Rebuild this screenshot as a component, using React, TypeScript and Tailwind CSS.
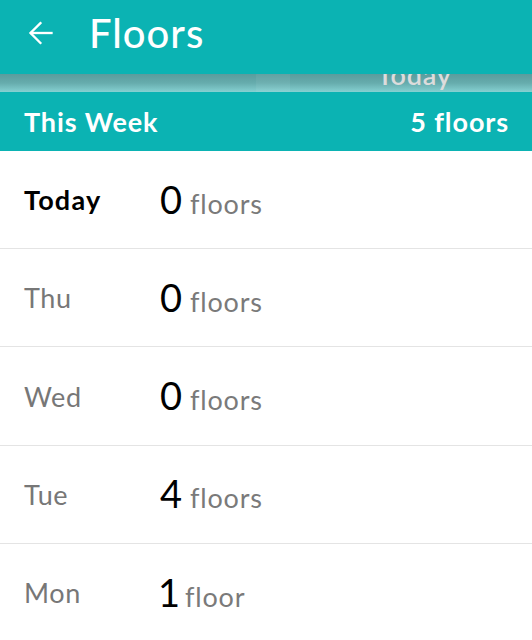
import React from "react";

const rows = [
  { day: "Today", num: "0", unit: "floors", today: true },
  { day: "Thu", num: "0", unit: "floors" },
  { day: "Wed", num: "0", unit: "floors" },
  { day: "Tue", num: "4", unit: "floors" },
  { day: "Mon", num: "1", unit: "floor" },
];

export default function App() {
  return (
    <div
      className="w-[532px] h-[640px] overflow-hidden bg-white"
      style={{ fontFamily: "Lato, 'Open Sans', sans-serif" }}
    >
      <div className="h-[74px] bg-[#0bb3b3] flex items-center pb-[8px] relative z-10">
        <svg
          width="28"
          height="28"
          viewBox="0 0 24 24"
          className="ml-[27px]"
          fill="none"
          stroke="white"
          strokeWidth="2"
          strokeLinecap="square"
        >
          <path d="M21 12H3.5" />
          <path d="M11.5 3.5L3 12l8.5 8.5" />
        </svg>
        <span className="ml-[34px] text-white text-[40px] leading-none font-medium tracking-[1px]">
          Floors
        </span>
      </div>
      <div className="h-[18px] relative overflow-hidden bg-gradient-to-b from-[#5a9c9d] via-[#66acad] to-[#86d1d2]">
        <div className="absolute left-[256px] top-0 h-full w-[34px] bg-white/5" />
        <span className="absolute left-[377px] top-[-13px] text-[27px] leading-none font-semibold tracking-[0.8px] text-[#dcdcdc]">
          Today
        </span>
      </div>
      <div className="h-[59px] bg-[#0bb3b3] flex items-center justify-between px-6 text-white text-[27px] font-bold leading-none tracking-[0.9px]">
        <span>This Week</span>
        <span className="-mr-[1px]">5 floors</span>
      </div>
      <div>
        {rows.map((r, i) => (
          <div
            key={r.day}
            className={`${i === 0 ? "h-[98px]" : "h-[98.4px]"} box-border border-b border-[#e4e4e4] flex items-center px-6`}
          >
            <span
              className={`w-[136px] text-[27px] leading-none ${
                r.today ? "font-bold text-black tracking-[1.2px]" : "text-[#777777] tracking-[0.6px]"
              }`}
            >
              {r.day}
            </span>
            <span className="flex items-baseline -translate-y-[1px]">
              <span
                className={`text-[38px] leading-none text-black font-normal ${
                  r.num === "1" ? "-ml-[2px]" : ""
                }`}
              >
                {r.num}
              </span>
              <span
                className={`${
                  r.num === "1" ? "ml-[5px]" : "ml-[8px]"
                } text-[27px] leading-none tracking-[0.8px] text-[#7a7a7a]`}
              >
                {r.unit}
              </span>
            </span>
          </div>
        ))}
      </div>
    </div>
  );
}
